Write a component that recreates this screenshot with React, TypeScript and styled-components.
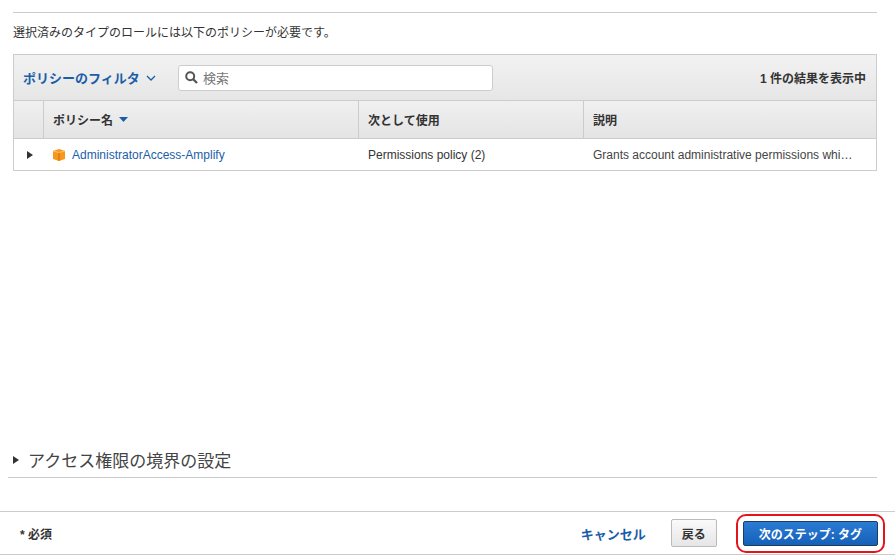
import React from "react";
import styled, { createGlobalStyle } from "styled-components";

const G = createGlobalStyle`
  body { margin: 0; font-family: Arial, "Liberation Sans", "Noto Sans CJK JP", sans-serif; color: #333; background: #fff; }
`;
const Page = styled.div`width: 895px; height: 555px; display: flex; flex-direction: column; overflow: hidden;`;
const Main = styled.div`padding: 12px 18px 0 13px; flex: 1; display: flex; flex-direction: column;`;
const TopLine = styled.div`border-top: 1px solid #ccc;`;
const Intro = styled.div`font-size: 12px; padding: 10px 0 0; height: 30px; box-sizing: border-box;`;
const Table = styled.div`border: 1px solid #ccc; border-bottom: none; margin-top: 11px;`;
const Toolbar = styled.div`height: 45px; display: flex; align-items: center; padding: 0 10px 0 9px; background: linear-gradient(#f2f2f2, #e6e6e6); border-bottom: 1px solid #ccc;`;
const Filter = styled.div`color: #1a5ea8; font-weight: bold; font-size: 13px; display: flex; align-items: center; gap: 6px; width: 155px;`;
const Search = styled.div`width: 315px; height: 26px; background: #fff; border: 1px solid #ccc; border-radius: 3px; display: flex; align-items: center; gap: 5px; padding-left: 6px; box-sizing: border-box; color: #777; font-size: 13px;`;
const Count = styled.div`margin-left: auto; font-weight: bold; font-size: 12px;`;
const Row = styled.div<{ $head?: boolean }>`display: grid; grid-template-columns: 30px 315px 225px 1fr; height: ${p => p.$head ? 37 : 31}px; border-bottom: 1px solid #ccc; background: ${p => p.$head ? "linear-gradient(#f0f0f0,#e4e4e4)" : "#fff"}; font-size: 12px; font-weight: ${p => p.$head ? "bold" : "normal"};`;
const Cell = styled.div<{ $line?: boolean }>`display: flex; align-items: center; padding-left: 9px; gap: 6px; white-space: nowrap; overflow: hidden; border-right: ${p => p.$line ? "1px solid #ccc" : "none"};`;
const Link = styled.span`color: #1a5ea8;`;
const Spacer = styled.div`flex: 1;`;
const Section = styled.div`display: flex; align-items: center; gap: 9px; font-size: 17px; color: #444; padding: 0 0 5px 5px; border-bottom: 1px solid #ccc; margin-left: -5px; margin-bottom: 33px;`;
const Footer = styled.div`height: 42px; border-top: 1px solid #ccc; border-bottom: 1px solid #ccc; display: flex; align-items: center; padding: 0 10px 0 20px; font-size: 12px;`;
const Req = styled.div`font-weight: bold; flex: 1;`;
const Cancel = styled.span`color: #1a5ea8; font-weight: bold; font-size: 13px; margin-right: 25px;`;
const Back = styled.button`height: 28px; padding: 0 10px; border: 1px solid #bbb; border-radius: 2px; background: linear-gradient(#fafafa,#e6e6e6); font: bold 12px Arial, "Noto Sans CJK JP", sans-serif; color: #333; margin-right: 19px;`;
const Ring = styled.div`border: 2px solid #e3151c; border-radius: 10px; padding: 5px 5px;`;
const Next = styled.button`height: 25px; padding: 0 15px; border: 1px solid #1c3c64; border-radius: 2px; background: linear-gradient(#2b7bd4,#1660b8); color: #fff; font: bold 12px Arial, "Noto Sans CJK JP", sans-serif;`;

const Tri = () => <svg width="6" height="8" viewBox="0 0 6 8"><path d="M0 0L6 4L0 8Z" fill="#333"/></svg>;

export default function App() {
  return (
    <Page>
      <G />
      <Main>
        <TopLine />
        <Intro>選択済みのタイプのロールには以下のポリシーが必要です。</Intro>
        <Table>
          <Toolbar>
            <Filter>ポリシーのフィルタ <svg width="10" height="6" viewBox="0 0 10 6"><path d="M1 1L5 5L9 1" stroke="#1a5ea8" strokeWidth="1.3" fill="none"/></svg></Filter>
            <Search><svg width="13" height="13" viewBox="0 0 13 13"><circle cx="5.2" cy="5.2" r="4" stroke="#555" strokeWidth="2" fill="none"/><path d="M8 8L12 12" stroke="#555" strokeWidth="2.3"/></svg>検索</Search>
            <Count>1 件の結果を表示中</Count>
          </Toolbar>
          <Row $head>
            <Cell $line />
            <Cell $line>ポリシー名 <svg width="9" height="5" viewBox="0 0 9 5"><path d="M0 0H9L4.5 5Z" fill="#1a5ea8"/></svg></Cell>
            <Cell $line>次として使用</Cell>
            <Cell>説明</Cell>
          </Row>
          <Row>
            <Cell style={{ paddingLeft: 13 }}><Tri /></Cell>
            <Cell style={{ paddingLeft: 8 }}>
              <svg width="14" height="14" viewBox="0 0 14 14"><path d="M1 3L7 1L13 3V11L7 13L1 11Z" fill="#f7981d"/><path d="M7 4V13" stroke="#c66f00" strokeWidth="1"/><path d="M1 3L7 4.5L13 3" stroke="#fbc16a" strokeWidth="1" fill="none"/></svg>
              <Link>AdministratorAccess-Amplify</Link>
            </Cell>
            <Cell>Permissions policy (2)</Cell>
            <Cell style={{ color: "#444" }}>Grants account administrative permissions whi…</Cell>
          </Row>
        </Table>
        <Spacer />
        <Section><Tri />アクセス権限の境界の設定</Section>
      </Main>
      <Footer>
        <Req>* 必須</Req>
        <Cancel>キャンセル</Cancel>
        <Back>戻る</Back>
        <Ring><Next>次のステップ: タグ</Next></Ring>
      </Footer>
    </Page>
  );
}
